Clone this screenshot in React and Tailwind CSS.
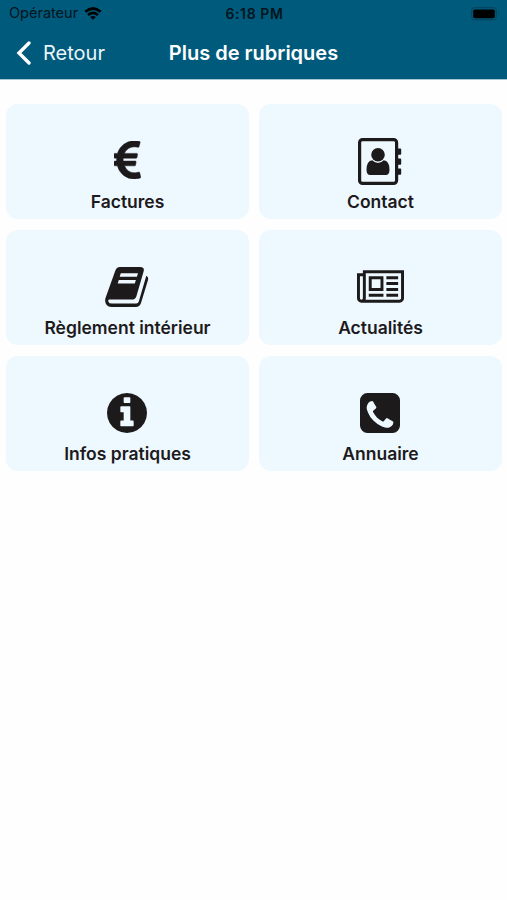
import React from 'react';

const FacturesIcon = () => (
  <svg className="mb-[3px] mr-px" width="27" height="38" viewBox="0 60 1024 1400" preserveAspectRatio="none" fill="currentColor" stroke="currentColor" strokeWidth="18">
    <path d="M976 1229l35 159q3 12-3 22.5t-17 14.5l-5 1q-4 2-10.5 3.5t-16 4.5-21.5 5.5-25.5 5-30 5-33.5 4.5-36.5 3-38.5 1q-234 0-409-130.5t-238-351.5h-95q-13 0-22.5-9.5t-9.5-22.5v-113q0-13 9.5-22.5t22.5-9.5h66q-2-57 1-105h-67q-14 0-23-9t-9-23v-114q0-14 9-23t23-9h98q67-210 243.5-338t400.5-128q102 0 194 23 11 3 20 15 6 11 3 24l-43 159q-3 13-14 19.5t-24 2.5l-4-1q-4-1-11.5-2.5l-17.5-3.5-22.5-3.5-26-3-29-2.5-29.5-1q-126 0-226 64t-150 176h468q16 0 25 12 10 12 7 26l-24 114q-5 26-32 26h-488q-3 37 0 105h459q15 0 25 12 9 12 6 27l-24 112q-2 11-11 18.5t-20 7.5h-387q48 117 149.5 185.5t228.5 68.5q18 0 36-1.5t33.5-3.5 29.5-4.5 24.5-5 18.5-4.5l12-3 5-2q13-5 26 2 12 7 15 21z" />
  </svg>
);

const ContactIcon = () => (
  <svg className="mr-px" width="44" height="47" viewBox="0 0 44 47" fill="currentColor">
    <rect x="1.6" y="1.6" width="37" height="43.8" rx="3" fill="none" stroke="currentColor" strokeWidth="3.2" />
    <path d="M38 10.5h4.3q.9 0 .9.9v4.4q0 .9-.9.9h-4.3zM38 20.5h4.3q.9 0 .9.9v4.4q0 .9-.9.9h-4.3zM38 30.5h4.3q.9 0 .9.9v4.4q0 .9-.9.9h-4.3z" />
    <circle cx="20" cy="16.8" r="6.8" />
    <path d="M14.3 22.2q2.4 2.7 5.7 2.7t5.7-2.7q5.8.5 5.8 9.6 0 5.2-3.8 5.2h-15.4q-3.8 0-3.8-5.2 0-9.1 5.8-9.6z" />
  </svg>
);

const ReglementIcon = () => (
  <svg className="mr-px" width="44" height="40" viewBox="0 0 44 40">
    <path d="M15 0H35.2Q39.8 0 38.6 4.4L31.4 29.2Q30.3 32.6 27 32.6H4.5Q3 32.6 3.3 34.4 4 36.6 7 36.6H31.3Q33.2 36.6 33.8 34.6L41.3 8.7Q43.8 9.9 43 12.9L36 36Q34.7 40 30.8 40H6.6Q2.7 40 1 37Q-.4 34.4.5 31L10 4.4Q11.4 0 15 0Z" fill="currentColor" />
    <path d="M15.8 6.2H33L31.9 9.8H14.7ZM13.8 13H30.9L29.8 16.6H12.7Z" fill="#eef8ff" />
  </svg>
);

const ActualitesIcon = () => (
  <svg className="mb-[2px] mr-px" width="47" height="33" viewBox="0 128 2048 1408" fill="currentColor">
    <path d="M1024 512h-384v384h384v-384zm128 640v128h-640v-128h640zm0-768v640h-640v-640h640zm640 768v128h-512v-128h512zm0-256v128h-512v-128h512zm0-256v128h-512v-128h512zm0-256v128h-512v-128h512zm-1536 960v-960h-128v960q0 26 19 45t45 19 45-19 19-45zm1664 0v-1088h-1536v1088q0 33-11 64h1483q26 0 45-19t19-45zm128-1216v1216q0 80-56 136t-136 56h-1664q-80 0-136-56t-56-136v-1088h256v-128h1792z" />
  </svg>
);

const InfosIcon = () => (
  <svg className="mr-px" width="40" height="40" viewBox="0 128 1536 1536" fill="currentColor">
    <path d="M1024 1376v-160q0-14-9-23t-23-9h-96v-512q0-14-9-23t-23-9h-320q-14 0-23 9t-9 23v160q0 14 9 23t23 9h96v320h-96q-14 0-23 9t-9 23v160q0 14 9 23t23 9h448q14 0 23-9t9-23zm-128-896v-160q0-14-9-23t-23-9h-192q-14 0-23 9t-9 23v160q0 14 9 23t23 9h192q14 0 23-9t9-23zm640 416q0 209-103 385.5t-279.5 279.5-385.5 103-385.5-103-279.5-279.5-103-385.5 103-385.5 279.5-279.5 385.5-103 385.5 103 279.5 279.5 103 385.5z" />
  </svg>
);

const AnnuaireIcon = () => (
  <svg className="mr-px" width="40" height="40" viewBox="0 0 1536 1536" fill="currentColor">
    <path d="M1280 1120q0-11-2-16-3-8-38.5-29.5t-88.5-49.5l-53-29q-5-3-19-13t-25-15-21-5q-18 0-47 32.5t-57 65.5-44 33q-7 0-16.5-3.5t-15.5-6.5-17-9.5-14-8.5q-99-55-170.5-126.5t-126.5-170.5q-2-3-8.5-14t-9.5-17-6.5-15.5-3.5-16.5q0-13 20.5-33.5t45-38.5 45-39.5 20.5-36.5q0-10-5-21t-15-25-13-19q-3-6-15-28.5t-25-45.5-26.5-47.5-25-40.5-16.5-18-16-2q-48 0-101 22-46 21-80 94.5t-34 130.5q0 16 2.5 34t5 30.5 9 33 10 29.5 12.5 33 11 30q60 164 216.5 320.5t320.5 216.5q6 2 30 11t33 12.5 29.5 10 33 9 30.5 5 34 2.5q57 0 130.5-34t94.5-80q22-53 22-101zm256-832v960q0 119-84.5 203.5t-203.5 84.5h-960q-119 0-203.5-84.5t-84.5-203.5v-960q0-119 84.5-203.5t203.5-84.5h960q119 0 203.5 84.5t84.5 203.5z" />
  </svg>
);

const App = () => {
  const rubriques = [
    { icon: <FacturesIcon />, title: 'Factures' },
    { icon: <ContactIcon />, title: 'Contact' },
    { icon: <ReglementIcon />, title: 'Règlement intérieur' },
    { icon: <ActualitesIcon />, title: 'Actualités' },
    { icon: <InfosIcon />, title: 'Infos pratiques' },
    { icon: <AnnuaireIcon />, title: 'Annuaire' }
  ];

  return (
    <div className="min-h-screen bg-[#fefefe] font-[Inter,sans-serif]">
      <header className="h-20 border-b border-[#a5c6d4] bg-[#005a7c]">
        {/* Status bar */}
        <div className="grid h-[27px] grid-cols-3 items-center pl-[9px] pr-[7px] text-[#04151d]">
          <div className="flex items-center gap-[6px]">
            <span className="text-[14.5px] leading-none">Opérateur</span>
            <svg width="18" height="13" viewBox="0 0 19 14" fill="none" stroke="#000" strokeWidth="2.9">
              <path d="M1.2 5.2Q9.5-2 17.8 5.2" />
              <path d="M4.2 8.6Q9.5 4.1 14.8 8.6" />
              <path d="M9.5 13.8L6.5 10.9Q9.5 8.6 12.5 10.9z" fill="#000" stroke="none" />
            </svg>
          </div>
          <span className="text-center text-[14px] font-semibold leading-none tracking-[0.6px]">6:18 PM</span>
          <svg className="justify-self-end" width="29" height="14" viewBox="0 0 29 14">
            <rect x="0.7" y="0.7" width="24.6" height="12.2" rx="3.5" fill="none" stroke="#044661" strokeWidth="1.2" />
            <rect x="2.2" y="2.4" width="21.6" height="8.8" rx="1.8" fill="#000" />
            <path d="M27 4.6q2 2.2 0 4.4z" fill="#044661" />
          </svg>
        </div>

        {/* Navigation bar */}
        <div className="grid h-[51px] grid-cols-[1fr_auto_1fr] items-center px-4 text-white">
          <button className="flex items-center gap-3">
            <svg width="15" height="24" viewBox="0 0 15 24" fill="none" stroke="currentColor" strokeWidth="3.4" strokeLinecap="round">
              <path d="M13 2L3 12L13 22" />
            </svg>
            <span className="text-[20px] leading-none text-[#e9f5fa]">Retour</span>
          </button>
          <h1 className="text-[20px] font-semibold leading-none">Plus de rubriques</h1>
        </div>
      </header>

      <main className="grid grid-cols-2 gap-x-[10px] gap-y-[11px] pl-[6px] pr-[5px] pt-6">
        {rubriques.map((rubrique) => (
          <button
            key={rubrique.title}
            className="flex h-[115px] flex-col items-center rounded-xl bg-[#eef8ff] pt-[33px] text-[#1d1a1c]"
          >
            <span className="flex h-12 items-center">{rubrique.icon}</span>
            <span className="mt-[6px] text-[17.5px] font-semibold leading-[22px]">{rubrique.title}</span>
          </button>
        ))}
      </main>
    </div>
  );
};

export default App;
